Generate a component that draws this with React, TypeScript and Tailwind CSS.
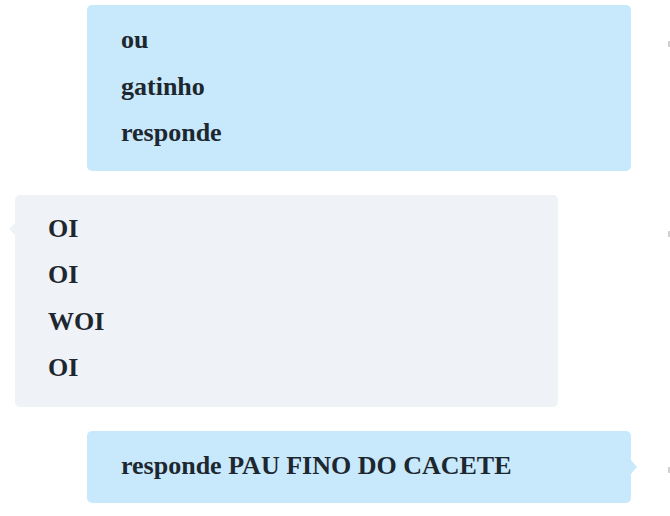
import React from "react";

type Msg = { side: "me" | "them"; lines: string[]; tail?: boolean };

const messages: Msg[] = [
  { side: "me", lines: ["ou", "gatinho", "responde"] },
  { side: "them", lines: ["OI", "OI", "WOI", "OI"], tail: true },
  { side: "me", lines: ["responde PAU FINO DO CACETE"], tail: true },
];

const Bubble: React.FC<{ msg: Msg }> = ({ msg }) => {
  const mine = msg.side === "me";
  return (
    <div className={mine ? "flex w-full items-start pl-[87px]" : "flex w-full items-start pl-[15px]"}>
      <div
        className={
          mine
            ? "relative w-[544px] shrink-0 rounded-[5px] bg-[#c8e9fb] pt-[12px] pb-[14px] pl-[34px]"
            : "relative w-[543px] shrink-0 rounded-[5px] bg-[#eff2f7] pt-[11px] pb-[15px] pl-[33px]"
        }
      >
        {msg.tail && mine && (
          <span className="absolute right-[-6px] top-1/2 -translate-y-1/2 border-y-[7px] border-l-[6px] border-y-transparent border-l-[#c8e9fb]" />
        )}
        {msg.tail && !mine && (
          <span className="absolute left-[-6px] top-[28px] border-y-[6px] border-r-[6px] border-y-transparent border-r-[#eff2f7]" />
        )}
        {msg.lines.map((line, i) => (
          <p key={i} className="text-[26px] font-bold leading-[46.5px] text-[#1d2730]">
            {line}
          </p>
        ))}
      </div>
      {/* read marker, cut off at window edge */}
      <div className="ml-auto mr-[-2px] mt-[36px] h-[6px] w-[4px] shrink-0 rounded-[1px] bg-[#cfcfcf]" />
    </div>
  );
};

export default function App() {
  return (
    <div
      className="h-[516px] w-[670px] overflow-hidden bg-white pt-[5px]"
      style={{ fontFamily: '"Liberation Serif", "Times New Roman", serif' }}
    >
      <div className="flex flex-col gap-[24px]">
        {messages.map((m, i) => (
          <Bubble key={i} msg={m} />
        ))}
      </div>
    </div>
  );
}
